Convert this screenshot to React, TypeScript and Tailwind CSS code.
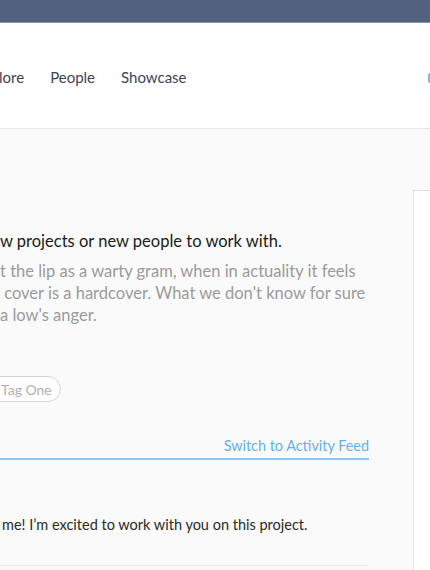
import React from "react";

export default function App() {
  return (
    <div className="w-[430px] h-[570px] overflow-hidden bg-[#fafafa] relative" style={{ fontFamily: '"Source Sans Pro", Lato, "Open Sans", sans-serif' }}>
      <div className="h-[23px] bg-[#53637f] border-b border-[#8a93a3]" />
      <div className="h-[106px] bg-white border-b border-[#e6e6e6] flex items-center">
        <nav className="flex items-center gap-[26px] text-[15px] text-[#3b4456] mt-[4px] -ml-[1px]">
          <span>lore</span>
          <span>People</span>
          <span>Showcase</span>
        </nav>
        <div className="ml-auto mt-[4px] w-[2px] h-[10px] rounded-l-full bg-[#7fb6ef]" />
      </div>
      <div className="flex">
        <div className="w-[369px] flex flex-col">
          <div className="mt-[101px] text-[16.5px] leading-[22px] text-[#1a1a1a] whitespace-nowrap">w projects or new people to work with.</div>
          <div className="mt-[8px] text-[16.5px] leading-[22px] text-[#9b9b9b] whitespace-nowrap">
            <div>t the lip as a warty gram, when in actuality it feels</div>
            <div>&nbsp;cover is a hardcover. What we don't know for sure</div>
            <div>a low's anger.</div>
          </div>
          <div className="mt-[50px] flex">
            <span className="-ml-[12px] pl-[12px] pr-[8px] h-[26px] flex items-center rounded-full border border-[#d6d6d6] bg-white text-[14px] text-[#b0b0b0]">Tag One</span>
          </div>
          <div className="mt-[34px] flex justify-end text-[14.4px] leading-[20px] text-[#62b0f0]">Switch to Activity Feed</div>
          <div className="mt-[2px] h-[2px] bg-[#8cc6f5]" />
          <div className="mt-[55px] pl-[2px] text-[14.5px] leading-[20px] text-[#2a2a2a] whitespace-nowrap">me! I’m excited to work with you on this project.</div>
          <div className="mt-[30px] h-px bg-[#ececec]" />
        </div>
        <div className="ml-[44px] mt-[61px] flex-1 bg-white border-l border-t border-[#e2e2e2] h-[400px]" />
      </div>
    </div>
  );
}
